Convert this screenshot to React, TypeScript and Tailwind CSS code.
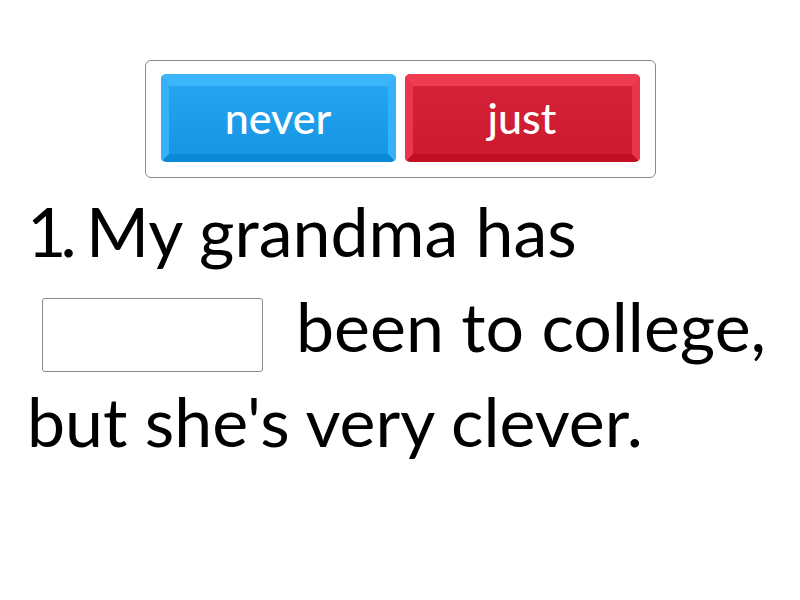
import React from "react";

function Tile({ label, kind }: { label: string; kind: "blue" | "red" }) {
  const cls =
    kind === "blue"
      ? "border-t-[#3cb6fb] border-x-[#36b0f8] border-b-[#0b89d6] bg-gradient-to-b from-[#25a4f0] to-[#1596e3]"
      : "border-t-[#ef3b50] border-x-[#ea354a] border-b-[#bf0f20] bg-gradient-to-b from-[#d62238] to-[#cc1a2e]";
  return (
    <div
      className={`w-[235px] h-[88px] rounded-[5px] border-t-[12px] border-x-[8px] border-b-[8px] ${cls} flex items-center justify-center`}
    >
      <span className="text-white text-[43px] font-medium leading-none -mt-[6px]">{label}</span>
    </div>
  );
}

export default function App() {
  return (
    <div
      className="w-[800px] h-[600px] bg-white text-black overflow-hidden"
      style={{ fontFamily: 'Lato, "Noto Sans", sans-serif' }}
    >
      <div className="pt-[60px] flex justify-center">
        <div className="w-[511px] h-[118px] border border-[#8a8a8a] rounded-[6px] px-[15px] pt-[13px] flex gap-[9px]">
          <Tile label="never" kind="blue" />
          <Tile label="just" kind="red" />
        </div>
      </div>
      <div className="pl-[27px] pt-[5px] text-[68px] leading-[95px]">
        <div>
          <span className="mr-[-8px]">
            <span className="tracking-[-6px]">1</span>.
          </span>{" "}
          My grandma has
        </div>
        <div className="flex items-center">
          <div className="ml-[15px] w-[221px] h-[74px] border border-[#8a8a8a] rounded-[3px] bg-white mt-[18px]" />
          <span className="ml-[33px]">been to college,</span>
        </div>
        <div>but she's very clever.</div>
      </div>
    </div>
  );
}
